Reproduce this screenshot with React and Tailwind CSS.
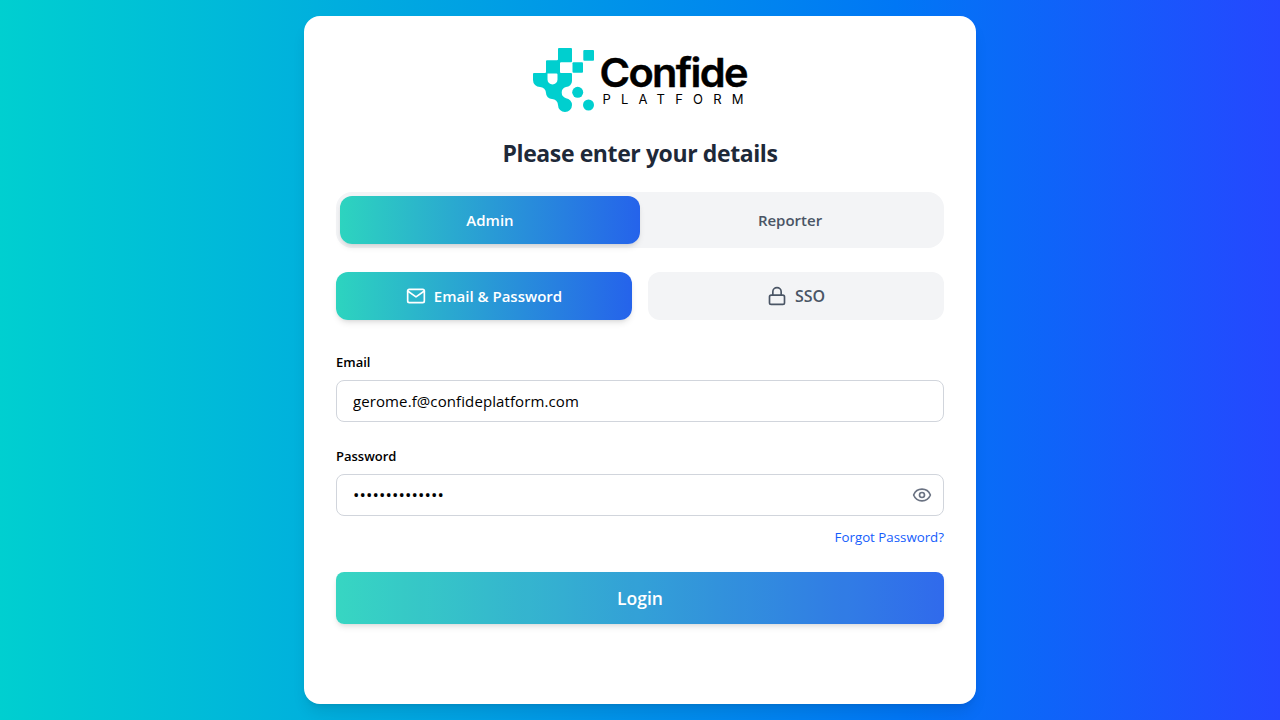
import { Eye, Lock } from "lucide-react";
import { FiMail } from "react-icons/fi";

function Logo() {
  return (
    <svg viewBox="0 0 214 64" className="h-16 w-[214px] overflow-visible" role="img" aria-label="Confide Platform">
      <g fill="#00cfcf">
        <path fillRule="evenodd" d="M26 0h12q1 0 1 1v12.300q0 1-1 1H28q-1 0-1 1V24q0 1 1 1h10q1 0 1 1v7a6 6 0 0 1-6 6a5.800 5.800 0 0 0 0 11.200A6.800 6.800 0 0 1 39 57a7 7 0 0 1-14 0a6 6 0 0 0-6-6a6 6 0 0 1-6-6a6 6 0 0 0-6-6a7 7 0 0 1-7-7v-6q0-1 1-1h11q1 0 1-1V13.300q0-1 1-1h10q1 0 1-1V1q0-1 1-1ZM14.500 25.500v6a5 5 0 0 0 10 0v-5q0-1-1-1Z" />
        <rect x="50.300" y="2" width="10.700" height="10.700" rx="1" />
        <rect x="39.500" y="14.300" width="10.500" height="10.500" rx="1" />
        <circle cx="44.700" cy="44.300" r="5.500" />
        <circle cx="55.500" cy="57" r="5.500" />
      </g>
      <text x="66.500" y="39" textLength="147.500" lengthAdjust="spacingAndGlyphs" fill="#000" stroke="#000" strokeWidth=".4" className="font-['Inter',sans-serif] text-[40px] font-semibold tracking-[-1.6px]">Confide</text>
      <text x="69.500" y="55.500" textLength="141" lengthAdjust="spacing" fill="#000" className="font-['Inter',sans-serif] text-[13px] font-normal">PLATFORM</text>
    </svg>
  );
}

export default function App() {
  return (
    <main className="flex h-[720px] justify-center bg-linear-to-r/srgb from-[#00cfd0] via-[#0077f5] via-70% to-[#2547ff] py-4 font-['Open_Sans','Noto_Sans',sans-serif]">
      <section className="flex w-[672px] flex-col rounded-2xl bg-white p-8 shadow-lg">
        <div className="flex justify-center"><Logo /></div>
        <h1 className="mt-[23px] text-center text-[23px] leading-9 font-bold tracking-[-0.4px] text-gray-800">Please enter your details</h1>
        <div className="mt-[21px] flex h-14 rounded-2xl bg-gray-100 p-1 text-[15px] font-semibold">
          <button className="w-[300px] rounded-xl bg-linear-to-r/srgb from-[#2dd4bf] to-[#2563eb] text-white shadow-md">Admin</button>
          <button className="w-[300px] text-gray-600">Reporter</button>
        </div>
        <div className="mt-6 grid h-12 grid-cols-2 gap-4 text-[15px] font-semibold">
          <button className="flex items-center justify-center gap-2 rounded-xl bg-linear-to-r/srgb from-[#2dd4bf] to-[#2563eb] text-white shadow-md"><FiMail size={20} /><span>Email &amp; Password</span></button>
          <button className="flex items-center justify-center gap-2 rounded-xl bg-gray-100 text-gray-600"><Lock size={20} /><span className="text-base">SSO</span></button>
        </div>
        <label className="mt-8 text-[13px] leading-5 font-semibold text-black" htmlFor="email">Email</label>
        <input id="email" defaultValue="gerome.f@confideplatform.com" className="mt-2 h-[42px] rounded-lg border border-gray-300 px-4 text-[15px] tracking-[0.1px] text-black" />
        <label className="mt-6 text-[13px] leading-5 font-semibold text-black" htmlFor="password">Password</label>
        <div className="mt-2 flex h-[42px] items-center rounded-lg border border-gray-300 pr-[11px] pl-4">
          <input id="password" type="password" defaultValue="confidential12" className="min-w-0 flex-1 text-[17px] tracking-[0.1px] text-black" />
          <Eye size={20} className="text-gray-500" />
        </div>
        <a className="mt-[11px] self-end text-[13.3px] leading-5 text-[#155dfc]">Forgot Password?</a>
        <button className="mt-[25px] h-[52px] rounded-lg bg-linear-to-r/srgb from-[#2dd4bf] to-[#2563eb] text-[17.5px] font-semibold text-white opacity-95 shadow-md">Login</button>
      </section>
    </main>
  );
}
